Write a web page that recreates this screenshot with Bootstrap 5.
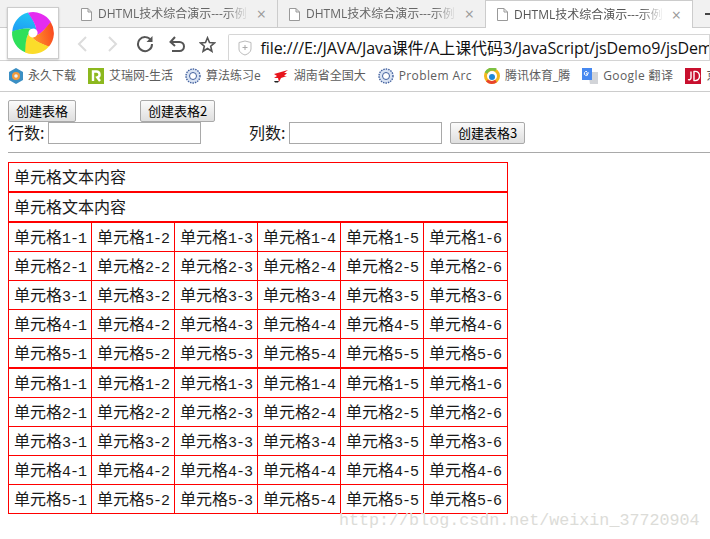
<!DOCTYPE html>
<html lang="zh">
<head>
    <meta charset="UTF-8">
    <title>DHTML技术综合演示</title>
    <link rel="stylesheet" href="https://cdn.jsdelivr.net/npm/bootstrap@5.3.0/dist/css/bootstrap.min.css">
    <script src="https://cdn.jsdelivr.net/npm/bootstrap@5.3.0/dist/js/bootstrap.bundle.min.js"></script>
    <style>
        html, body { height: 539px; overflow: hidden; }
        body { width: 710px; background: #fff; color: #1a1a1a; font-family: "Noto Sans CJK SC", sans-serif; position: relative; }
        .chrome-ui { font-family: "Open Sans", "Noto Sans CJK SC", sans-serif; position: relative; height: 92px; border-bottom: 1px solid #ccc; }
        .logo-caja { position: absolute; left: 7px; top: 7px; width: 52px; height: 52px; background: #fff; border: 1px solid #ccc; box-shadow: 0 1px 2px rgba(0,0,0,.2); }
        .tab-fila { height: 28px; padding-left: 70px; background: #f1f1f1; border-bottom: 1px solid #ccc; }
        .tab-item { width: 208px; flex: none; height: 28px; padding: 0 11px; gap: 6px; border-right: 1px solid #ccc; color: #666; font-size: 12px; }
        .tab-item.activa { background: #fff; border-left: 1px solid #ccc; border-top: 1px solid #ccc; height: 28px; margin-left: -1px; position: relative; color: #555; }
        .tab-texto { flex: 1; min-width: 0; overflow: hidden; white-space: nowrap; -webkit-mask-image: linear-gradient(to right, #000 84%, transparent 100%); mask-image: linear-gradient(to right, #000 84%, transparent 100%); }
        .tab-x { color: #999; font-size: 16px; line-height: 1; padding: 0 0 0 2px; }
        .tab-nueva { width: 5px; height: 2px; background: #444; margin-left: 12px; flex: none; }
        .barra-dir { height: 33px; padding-left: 66px; border-bottom: 1px solid #d4d4d4; }
        .barra-iconos { flex: none; }
        .boton-ico { width: 31.5px; height: 24px; flex: none; }
        .dir-caja { margin-left: 4px; height: 27px; margin-top: 6px; flex: 1; min-width: 0; border: 1px solid #d6d6d6; border-bottom: 0; border-radius: 2px 0 0 0; padding-left: 9px; gap: 9px; overflow: hidden; white-space: nowrap; font-size: 16px; letter-spacing: -.1px; color: #111; }
        .marcas { height: 30px; padding-left: 9px; gap: 12px; font-size: 12px; color: #5d5d5d; white-space: nowrap; overflow: hidden; }
        .marca { gap: 5px; flex: none; }
        .marca svg { flex: none; display: block; }
        .latin-ancho { letter-spacing: .4px; }
        .pagina { padding: 8px 0 0 8px; width: 710px; font-size: 16px; }
        .btn-viejo { height: 22px; padding: 0 7px; font-size: 13px; line-height: 20px; color: #000; border: 1px solid #a9a9a9; border-radius: 2px; background: linear-gradient(#fbfbfb, #dedede); font-family: inherit; flex: none; }
        .sep-btn { margin-left: 64px; }
        .fila-form { height: 22px; line-height: 20px; }
        .entrada { width: 153px; height: 22px; flex: none; border: 1px solid #a9a9a9; margin-left: 1px; padding: 0 2px; background: #fff; }
        .etiqueta { width: 39px; flex: none; white-space: nowrap; }
        .etiqueta-2 { margin-left: 48px; }
        .sep-btn3 { margin-left: 8px; }
        .linea { margin: 8px 0 9px; border: 0; border-top: 1px solid #a9a9a9; opacity: 1; }
        .tabla-roja { width: 500px; table-layout: fixed; border-collapse: collapse; margin: 0; }
        .tabla-roja td { border: 1px solid #f00; padding: 2px 0 0 5px; white-space: nowrap; line-height: 22px; overflow: hidden; }
        .tabla-roja td:nth-child(-n+5) { width: 83px; }
        .tabla-roja tr { height: 29px; }
        .tabla-una td { padding: 0 0 2px 5px; }
        .num { font-family: "Liberation Mono", monospace; font-size: 15px; letter-spacing: -1px; }
        .marca-agua { position: absolute; left: 339px; top: 508px; font-family: "Liberation Mono", monospace; font-size: 16.7px; color: #dcdcd8; white-space: nowrap; }
    </style>
</head>
<body>
    <div class="chrome-ui">
        <!-- Pestañas -->
        <div class="tab-fila d-flex">
            <div class="tab-item d-flex align-items-center">
                <svg width="11" height="13" viewBox="0 0 11 13"><path d="M.5.5h6.500l3.500 3.500v8.500h-10zM7 .5v3.500h3.500" fill="#fff" stroke="#999"/></svg>
                <span class="tab-texto">DHTML技术综合演示---示例</span><span class="tab-x">×</span>
            </div>
            <div class="tab-item d-flex align-items-center">
                <svg width="11" height="13" viewBox="0 0 11 13"><path d="M.5.5h6.500l3.500 3.500v8.500h-10zM7 .5v3.500h3.500" fill="#fff" stroke="#999"/></svg>
                <span class="tab-texto">DHTML技术综合演示---示例</span><span class="tab-x">×</span>
            </div>
            <div class="tab-item activa d-flex align-items-center">
                <svg width="11" height="13" viewBox="0 0 11 13"><path d="M.5.5h6.500l3.500 3.500v8.500h-10zM7 .5v3.500h3.500" fill="#fff" stroke="#999"/></svg>
                <span class="tab-texto">DHTML技术综合演示---示例</span><span class="tab-x">×</span>
            </div>
            <div class="tab-nueva align-self-center"></div>
        </div>

        <!-- Barra de direccion -->
        <div class="barra-dir d-flex align-items-center">
            <div class="barra-iconos d-flex align-items-center">
                <div class="boton-ico d-flex justify-content-center align-items-center">
                    <svg width="12" height="16" viewBox="0 0 12 16"><path d="M10 1 3 8l7 7" fill="none" stroke="#dcdcdc" stroke-width="2"/></svg>
                </div>
                <div class="boton-ico d-flex justify-content-center align-items-center">
                    <svg width="12" height="16" viewBox="0 0 12 16"><path d="m2 1 7 7-7 7" fill="none" stroke="#dcdcdc" stroke-width="2"/></svg>
                </div>
                <div class="boton-ico d-flex justify-content-center align-items-center">
                    <svg width="18" height="18" viewBox="0 0 18 18"><path d="M15 5.500A7 7 0 1 0 16 9" fill="none" stroke="#555" stroke-width="2"/><path d="M16.500 1v6h-6z" fill="#555"/></svg>
                </div>
                <div class="boton-ico d-flex justify-content-center align-items-center">
                    <svg width="17" height="17" viewBox="0 0 17 17"><path d="M3 6h8.500a4.500 4.500 0 0 1 0 9H4" fill="none" stroke="#555" stroke-width="2"/><path d="M7 1 2.500 6 7 10" fill="none" stroke="#555" stroke-width="2"/></svg>
                </div>
                <div class="boton-ico d-flex justify-content-center align-items-center">
                    <svg width="17" height="17" viewBox="0 0 17 17"><path d="m8.500 1.800 2 4.700 5 .4-3.800 3.300 1.200 5-4.400-2.700-4.400 2.700 1.200-5L1.500 6.900l5-.4z" fill="none" stroke="#555" stroke-width="1.600"/></svg>
                </div>
            </div>
            <div class="dir-caja d-flex align-items-center">
                <svg class="flex-shrink-0" width="14" height="16" viewBox="0 0 14 16"><path d="M1 2.500 7 1l6 1.500V9c0 3-3 5-6 6-3-1-6-3-6-6z" fill="#fff" stroke="#bbb"/><path d="M7 5v5M4.500 7.500h5" stroke="#aaa"/></svg>
                <span>file:///E:/JAVA/Java课件/A上课代码3/JavaScript/jsDemo9/jsDemo9.html</span>
            </div>
        </div>

        <!-- Marcadores -->
        <div class="marcas d-flex align-items-center">
            <div class="marca d-flex align-items-center">
                <svg width="14" height="16" viewBox="0 0 14 16"><path d="M7 0 14 4v8l-7 4-7-4V4z" fill="#3b8fc4"/><circle cx="7" cy="8" r="4" fill="#f29a3c"/><circle cx="7" cy="8" r="1.800" fill="#e9f1f6"/></svg>
                <span>永久下载</span>
            </div>
            <div class="marca d-flex align-items-center">
                <svg width="16" height="16" viewBox="0 0 16 16"><rect width="16" height="16" fill="#8cb81e"/><path d="M5 13V3.500h3.500a3 3 0 0 1 .8 5.900L12 13" fill="none" stroke="#fff" stroke-width="2.400"/></svg>
                <span>艾瑞网-生活</span>
            </div>
            <div class="marca d-flex align-items-center">
                <svg width="16" height="16" viewBox="0 0 16 16"><circle cx="8" cy="8" r="7" fill="#d9e3f3" stroke="#41609e" stroke-width="1.400" stroke-dasharray="1.500 1"/><circle cx="8" cy="8" r="3.500" fill="#fff" stroke="#41609e"/></svg>
                <span>算法练习e</span>
            </div>
            <div class="marca d-flex align-items-center">
                <svg width="16" height="16" viewBox="0 0 16 16"><path d="M1 6 15 2l-4 3h3l-3 3h3l-6 2-2 4-1-4H1l3-2z" fill="#e8141c"/><path d="M1 13h5l-1 1.500H2z" fill="#222"/></svg>
                <span>湖南省全国大</span>
            </div>
            <div class="marca d-flex align-items-center">
                <svg width="16" height="16" viewBox="0 0 16 16"><circle cx="8" cy="8" r="7" fill="#d9e3f3" stroke="#41609e" stroke-width="1.400" stroke-dasharray="1.500 1"/><circle cx="8" cy="8" r="3.500" fill="#fff" stroke="#41609e"/></svg>
                <span class="latin-ancho">Problem Arc</span>
            </div>
            <div class="marca d-flex align-items-center">
                <svg width="16" height="16" viewBox="0 0 16 16"><circle cx="8" cy="8" r="6.500" fill="#fff" stroke="#f4b81c" stroke-width="3"/><path d="M2 5a7 7 0 0 1 10-3" fill="none" stroke="#7cc142" stroke-width="3"/><path d="M3 12.500a7 7 0 0 0 9 .5" fill="none" stroke="#e8432e" stroke-width="3"/><circle cx="8" cy="9" r="3" fill="#1e88d8"/></svg>
                <span>腾讯体育_腾</span>
            </div>
            <div class="marca d-flex align-items-center">
                <svg width="16" height="16" viewBox="0 0 16 16"><path d="M6 4h10v12H8z" fill="#d2d4d8"/><path d="M0 0h10v12H0z" fill="#4688f0"/><path d="M7 5H4.800v1.500H6A2 2 0 1 1 5 3.600" fill="none" stroke="#fff"/></svg>
                <span class="latin-ancho">Google 翻译</span>
            </div>
            <div class="marca d-flex align-items-center">
                <svg width="16" height="16" viewBox="0 0 16 16"><rect width="16" height="16" fill="#c8102e"/><path d="M6 3.500v6.500a2 2 0 0 1-3 1.500M9 3.500v9c4 .5 5.500-1.500 5.500-4.500S13 3 9 3.500z" fill="none" stroke="#fff" stroke-width="1.400"/></svg>
                <span>京东</span>
            </div>
        </div>

        <div class="logo-caja">
            <svg width="50" height="50" viewBox="-25 -25 50 50">
                <defs>
                    <path id="petalo" d="M0-4.500C-4-8-11-9-18-10.500A21 21 0 0 1 4.500-20.500C5.800-14.500 6.370-6.270 4.300-1.400A4.500 4.500 0 0 0 0-4.500Z"/>
                    <linearGradient id="grad-azul" x1="0" y1="1" x2="1" y2="0"><stop offset="0" stop-color="#1e8cf5"/><stop offset="1" stop-color="#22c8f4"/></linearGradient>
                    <linearGradient id="grad-naranja" x1="0" y1="0" x2="1" y2="1"><stop offset="0" stop-color="#f8321e"/><stop offset="1" stop-color="#ff9a2a"/></linearGradient>
                </defs>
                <use href="#petalo" transform="rotate(-26)" fill="url(#grad-azul)"/>
                <use href="#petalo" transform="rotate(46)" fill="#e42cf0"/>
                <use href="#petalo" transform="rotate(118)" fill="url(#grad-naranja)"/>
                <use href="#petalo" transform="rotate(190)" fill="#fbdc2a"/>
                <use href="#petalo" transform="rotate(262)" fill="#2ee05a"/>
            </svg>
        </div>
    </div>

    <!-- Contenido de la pagina -->
    <div class="pagina">
        <div class="d-flex">
            <button class="btn-viejo" type="button">创建表格</button>
            <button class="btn-viejo sep-btn" type="button">创建表格2</button>
        </div>
        <div class="fila-form d-flex">
            <span class="etiqueta">行数:</span>
            <input class="entrada" type="text">
            <span class="etiqueta etiqueta-2">列数:</span>
            <input class="entrada" type="text">
            <button class="btn-viejo sep-btn3" type="button">创建表格3</button>
        </div>
        <hr class="linea">
        <div id="tablas"></div>
    </div>

    <div class="marca-agua">http://blog.csdn.net/weixin_37720904</div>

    <script>
        // tablas apiladas: dos de una celda y dos de 5x6
        function tablaUna() {
            return '<table class="tabla-roja tabla-una"><tr><td>单元格文本内容</td></tr></table>';
        }
        function tablaGrande() {
            let html = '<table class="tabla-roja">';
            for (let i = 1; i <= 5; i++) {
                html += '<tr>';
                for (let j = 1; j <= 6; j++) {
                    html += `<td>单元格<span class="num">${i}-${j}</span></td>`;
                }
                html += '</tr>';
            }
            return html + '</table>';
        }
        document.getElementById('tablas').innerHTML = tablaUna() + tablaUna() + tablaGrande() + tablaGrande();
    </script>
</body>
</html>
